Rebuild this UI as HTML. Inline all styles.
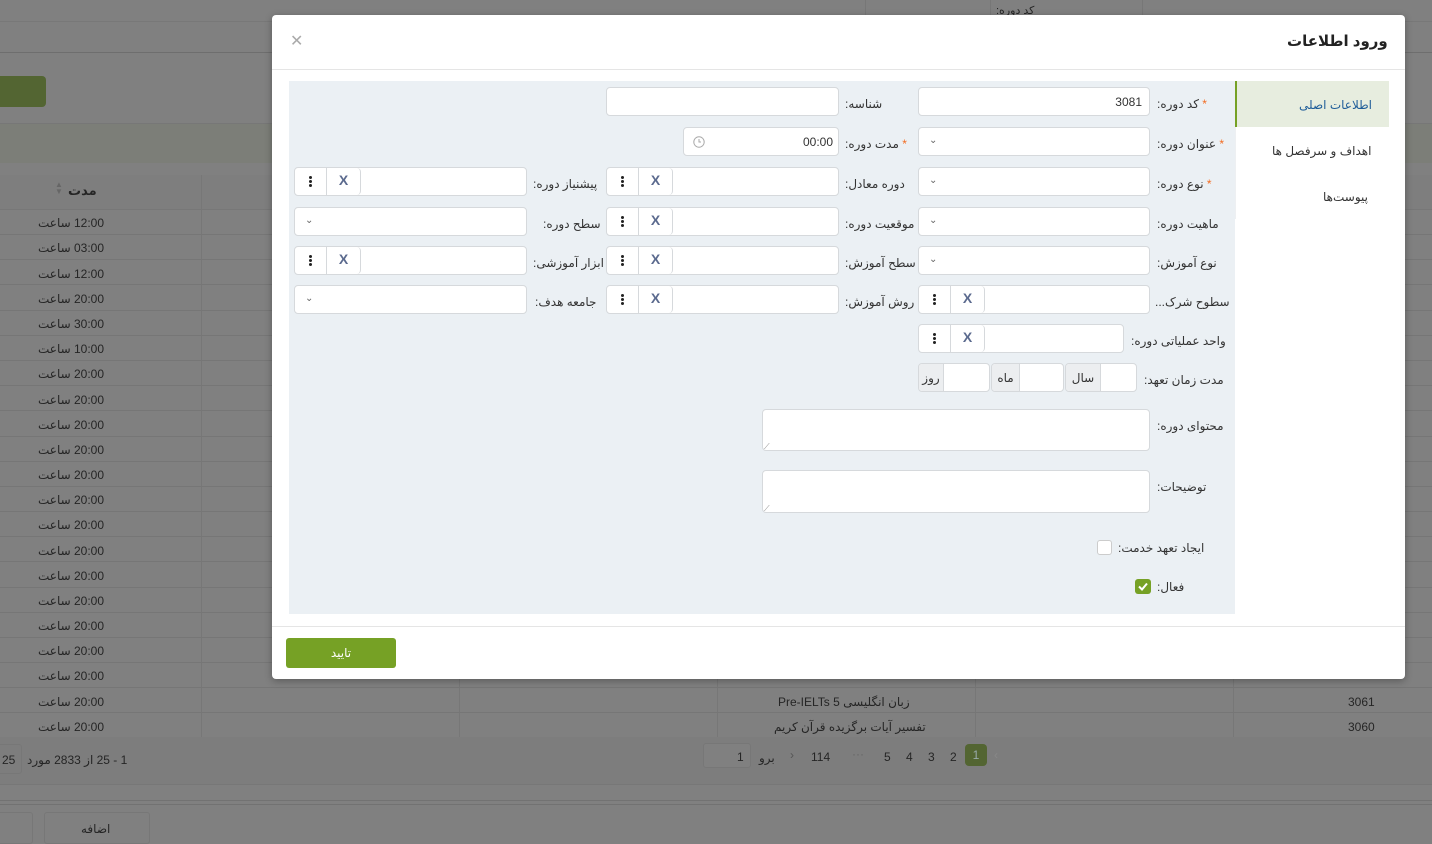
<!DOCTYPE html>
<html><head><meta charset="utf-8">
<style>
*{margin:0;padding:0;box-sizing:border-box}
body{width:1432px;height:843px;overflow:hidden;background:#808080;font-family:"Liberation Sans","DejaVu Sans",sans-serif;font-size:12px;color:#222;position:relative}
.a{position:absolute}
.row{position:absolute;left:0;width:1432px;height:25px;border-bottom:1px solid #767676}
.t{position:absolute;font-size:12px;color:#252525;direction:rtl;white-space:nowrap;margin-top:1px}
.vl{position:absolute;top:175px;height:562px;width:1px;background:#777}
.modal{position:absolute;left:272px;top:15px;width:1133px;height:664px;background:#fff;border-radius:4px;box-shadow:0 2px 8px rgba(0,0,0,.3)}
.in{position:absolute;height:29px;background:#fff;border:1px solid #d6d9dc;border-radius:4px}
.lb{position:absolute;font-size:12px;color:#333;direction:rtl;text-align:left;white-space:nowrap;line-height:14px}
.st{color:#f36c21}
.dots{position:absolute;left:0;top:0;width:32px;height:27px;border-right:1px solid #d6d9dc}
.dots i{position:absolute;left:14px;width:3px;height:3px;background:#222;border-radius:50%}
.xx{position:absolute;left:32px;top:0;width:34px;height:27px;border-right:1px solid #d6d9dc;border-radius:0 4px 4px 0;color:#5b6a8e;font-size:14px;font-weight:bold;text-align:center;line-height:24px}
.chev{position:absolute;left:10px;top:7px;font-size:10px;color:#666}
</style></head><body>
<div class="a" style="left:0;top:0;width:1432px;height:22px;border-bottom:1px solid #787878"></div>
<div class="a" style="left:865px;top:0;width:1px;height:22px;background:#777"></div>
<div class="a" style="left:990px;top:0;width:1px;height:22px;background:#777"></div>
<div class="a" style="left:1142px;top:0;width:1px;height:22px;background:#777"></div>
<div class="t" style="left:996px;top:3px;font-size:11px">کد دوره:</div>
<div class="a" style="left:0;top:52px;width:1432px;height:1px;background:#6e6e6e"></div>
<div class="a" style="left:-5px;top:76px;width:51px;height:31px;background:#536532;border-radius:4px"></div>
<div class="a" style="left:0;top:123px;width:1432px;height:40px;background:#7c7e78;border-top:1px solid #777"></div>
<div class="a" style="left:0;top:175px;width:1432px;height:35px;background:#7e7e7e;border-bottom:1px solid #777"></div>
<div class="t" style="left:68px;top:182px;font-weight:bold;font-size:13px">مدت</div>
<div class="a" style="left:55px;top:181px;color:#666;font-size:8px;line-height:7px">▲<br>▼</div>
<div class="vl" style="left:201px"></div><div class="vl" style="left:459px"></div><div class="vl" style="left:717px"></div><div class="vl" style="left:975px"></div><div class="vl" style="left:1233px"></div>
<div class="row" style="top:210px"></div><div class="t" style="left:38px;top:215px">12:00 ساعت</div>
<div class="row" style="top:235px"></div><div class="t" style="left:38px;top:240px">03:00 ساعت</div>
<div class="row" style="top:260px"></div><div class="t" style="left:38px;top:266px">12:00 ساعت</div>
<div class="row" style="top:286px"></div><div class="t" style="left:38px;top:291px">20:00 ساعت</div>
<div class="row" style="top:311px"></div><div class="t" style="left:38px;top:316px">30:00 ساعت</div>
<div class="row" style="top:336px"></div><div class="t" style="left:38px;top:341px">10:00 ساعت</div>
<div class="row" style="top:361px"></div><div class="t" style="left:38px;top:366px">20:00 ساعت</div>
<div class="row" style="top:386px"></div><div class="t" style="left:38px;top:392px">20:00 ساعت</div>
<div class="row" style="top:412px"></div><div class="t" style="left:38px;top:417px">20:00 ساعت</div>
<div class="row" style="top:437px"></div><div class="t" style="left:38px;top:442px">20:00 ساعت</div>
<div class="row" style="top:462px"></div><div class="t" style="left:38px;top:467px">20:00 ساعت</div>
<div class="row" style="top:487px"></div><div class="t" style="left:38px;top:492px">20:00 ساعت</div>
<div class="row" style="top:512px"></div><div class="t" style="left:38px;top:517px">20:00 ساعت</div>
<div class="row" style="top:537px"></div><div class="t" style="left:38px;top:543px">20:00 ساعت</div>
<div class="row" style="top:563px"></div><div class="t" style="left:38px;top:568px">20:00 ساعت</div>
<div class="row" style="top:588px"></div><div class="t" style="left:38px;top:593px">20:00 ساعت</div>
<div class="row" style="top:613px"></div><div class="t" style="left:38px;top:618px">20:00 ساعت</div>
<div class="row" style="top:638px"></div><div class="t" style="left:38px;top:643px">20:00 ساعت</div>
<div class="row" style="top:663px"></div><div class="t" style="left:38px;top:668px">20:00 ساعت</div>
<div class="row" style="top:688px"></div><div class="t" style="left:38px;top:694px">20:00 ساعت</div><div class="t" style="left:778px;top:694px">زبان انگلیسی Pre-IELTs 5</div><div class="t" style="left:1348px;top:694px">3061</div>
<div class="row" style="top:713px"></div><div class="t" style="left:38px;top:719px">20:00 ساعت</div><div class="t" style="left:774px;top:719px">تفسیر آیات برگزیده قرآن کریم</div><div class="t" style="left:1348px;top:719px">3060</div>
<div class="a" style="left:0;top:737px;width:1432px;height:48px;background:#7d7d7d;border-bottom:1px solid #777"></div>
<div class="a" style="left:-5px;top:744px;width:27px;height:30px;border:1px solid #777;border-radius:3px"></div>
<div class="t" style="left:2px;top:752px">25</div>
<div class="t" style="left:27px;top:752px">1 - 25 از 2833 مورد</div>
<div class="a" style="left:703px;top:743px;width:48px;height:25px;border:1px solid #777;border-radius:3px;background:#808080"></div>
<div class="t" style="left:737px;top:749px">1</div>
<div class="t" style="left:759px;top:750px">برو</div>
<div class="t" style="left:790px;top:747px;color:#555">‹</div>
<div class="t" style="left:811px;top:749px">114</div>
<div class="t" style="left:852px;top:746px;color:#666">···</div>
<div class="t" style="left:884px;top:749px">5</div><div class="t" style="left:906px;top:749px">4</div><div class="t" style="left:928px;top:749px">3</div><div class="t" style="left:950px;top:749px">2</div>
<div class="a" style="left:965px;top:744px;width:22px;height:22px;background:#536532;border-radius:4px;color:#9aa;text-align:center;line-height:22px">1</div>
<div class="t" style="left:994px;top:747px;color:#888">›</div>
<div class="a" style="left:0;top:800px;width:1432px;height:5px;border-top:1px solid #727272;border-bottom:1px solid #727272"></div>
<div class="a" style="left:-5px;top:812px;width:38px;height:32px;border:1px solid #777;border-radius:3px"></div>
<div class="a" style="left:44px;top:812px;width:106px;height:32px;border:1px solid #777;border-radius:3px"></div>
<div class="t" style="left:81px;top:821px">اضافه</div>

<div class="modal"></div>
<div class="a" style="left:1287px;top:32px;font-size:15px;font-weight:bold;color:#222;direction:rtl">ورود اطلاعات</div>
<div class="a" style="left:290px;top:31px;font-size:16px;color:#aaa">✕</div>
<div class="a" style="left:272px;top:69px;width:1133px;height:1px;background:#e5e5e5"></div>
<div class="a" style="left:289px;top:81px;width:946px;height:533px;background:#ebf0f4"></div>
<div class="a" style="left:1235px;top:81px;width:154px;height:46px;background:#e7eddf;border-left:2px solid #76a125"></div>
<div class="a" style="left:1235px;top:127px;width:1px;height:92px;background:#eef0f2"></div>
<div class="lb" style="left:1299px;top:98px;color:#1f5d99">اطلاعات اصلی</div>
<div class="lb" style="left:1272px;top:144px">اهداف و سرفصل ها</div>
<div class="lb" style="left:1323px;top:190px">پیوست‌ها</div>

<div class="lb" style="left:1157px;top:97px"><span class="st">*</span> کد دوره:</div>
<div class="in" style="left:918px;top:87px;width:232px"><span class="a" style="right:7px;top:7px;color:#333">3081</span></div>
<div class="lb" style="left:1157px;top:137px"><span class="st">*</span> عنوان دوره:</div>
<div class="in" style="left:918px;top:127px;width:232px"><span class="chev">⌄</span></div>
<div class="lb" style="left:1157px;top:177px"><span class="st">*</span> نوع دوره:</div>
<div class="in" style="left:918px;top:167px;width:232px"><span class="chev">⌄</span></div>
<div class="lb" style="left:1157px;top:217px">ماهیت دوره:</div>
<div class="in" style="left:918px;top:207px;width:232px"><span class="chev">⌄</span></div>
<div class="lb" style="left:1157px;top:256px">نوع آموزش:</div>
<div class="in" style="left:918px;top:246px;width:232px"><span class="chev">⌄</span></div>
<div class="lb" style="left:1155px;top:295px">سطوح شرک...</div>
<div class="in" style="left:918px;top:285px;width:232px"><div class="dots"><i style="top:8px"></i><i style="top:12px"></i><i style="top:16px"></i></div><div class="xx">X</div></div>
<div class="lb" style="left:1131px;top:334px">واحد عملیاتی دوره:</div>
<div class="in" style="left:918px;top:324px;width:206px"><div class="dots"><i style="top:8px"></i><i style="top:12px"></i><i style="top:16px"></i></div><div class="xx">X</div></div>
<div class="lb" style="left:1144px;top:373px">مدت زمان تعهد:</div>
<div class="in" style="left:1065px;top:363px;width:72px;overflow:hidden"><div class="a" style="left:0;top:0;width:35px;height:27px;background:#eceef0;border-right:1px solid #d6d9dc;text-align:center;line-height:29px;color:#333">سال</div></div>
<div class="in" style="left:991px;top:363px;width:73px;overflow:hidden"><div class="a" style="left:0;top:0;width:28px;height:27px;background:#eceef0;border-right:1px solid #d6d9dc;text-align:center;line-height:29px;color:#333">ماه</div></div>
<div class="in" style="left:918px;top:363px;width:72px;overflow:hidden"><div class="a" style="left:0;top:0;width:25px;height:27px;background:#eceef0;border-right:1px solid #d6d9dc;text-align:center;line-height:29px;color:#333">روز</div></div>
<div class="lb" style="left:1157px;top:419px">محتوای دوره:</div>
<div class="in" style="left:762px;top:409px;width:388px;height:42px"><span class="a" style="left:1px;bottom:-2px;font-size:8px;color:#888">⟋</span></div>
<div class="lb" style="left:1157px;top:480px">توضیحات:</div>
<div class="in" style="left:762px;top:470px;width:388px;height:43px"><span class="a" style="left:1px;bottom:-2px;font-size:8px;color:#888">⟋</span></div>
<div class="lb" style="left:1118px;top:541px">ایجاد تعهد خدمت:</div>
<div class="a" style="left:1097px;top:540px;width:15px;height:15px;background:#fff;border:1px solid #ccc;border-radius:3px"></div>
<div class="lb" style="left:1157px;top:580px">فعال:</div>
<div class="a" style="left:1135px;top:579px;width:16px;height:15px;background:#76a125;border-radius:3px"><svg width="16" height="15" viewBox="0 0 16 15"><path d="M4 7.5l3 3 5-6" stroke="#fff" stroke-width="2" fill="none"/></svg></div>

<div class="lb" style="left:845px;top:97px">شناسه:</div>
<div class="in" style="left:606px;top:87px;width:233px"></div>
<div class="lb" style="left:845px;top:137px"><span class="st">*</span> مدت دوره:</div>
<div class="in" style="left:683px;top:127px;width:156px"><span class="a" style="right:5px;top:7px;color:#333">00:00</span><svg class="a" style="left:9px;top:8px" width="12" height="12" viewBox="0 0 12 12"><circle cx="6" cy="6" r="5.2" stroke="#aaa" fill="none"/><path d="M6 3v3h2" stroke="#aaa" fill="none"/></svg></div>
<div class="lb" style="left:845px;top:177px">دوره معادل:</div>
<div class="in" style="left:606px;top:167px;width:233px"><div class="dots"><i style="top:8px"></i><i style="top:12px"></i><i style="top:16px"></i></div><div class="xx">X</div></div>
<div class="lb" style="left:845px;top:217px">موقعیت دوره:</div>
<div class="in" style="left:606px;top:207px;width:233px"><div class="dots"><i style="top:8px"></i><i style="top:12px"></i><i style="top:16px"></i></div><div class="xx">X</div></div>
<div class="lb" style="left:845px;top:256px">سطح آموزش:</div>
<div class="in" style="left:606px;top:246px;width:233px"><div class="dots"><i style="top:8px"></i><i style="top:12px"></i><i style="top:16px"></i></div><div class="xx">X</div></div>
<div class="lb" style="left:845px;top:295px">روش آموزش:</div>
<div class="in" style="left:606px;top:285px;width:233px"><div class="dots"><i style="top:8px"></i><i style="top:12px"></i><i style="top:16px"></i></div><div class="xx">X</div></div>

<div class="lb" style="left:533px;top:177px">پیشنیاز دوره:</div>
<div class="in" style="left:294px;top:167px;width:233px"><div class="dots"><i style="top:8px"></i><i style="top:12px"></i><i style="top:16px"></i></div><div class="xx">X</div></div>
<div class="lb" style="left:533px;top:217px;padding-left:10px">سطح دوره:</div>
<div class="in" style="left:294px;top:207px;width:233px"><span class="chev">⌄</span></div>
<div class="lb" style="left:533px;top:256px">ابزار آموزشی:</div>
<div class="in" style="left:294px;top:246px;width:233px"><div class="dots"><i style="top:8px"></i><i style="top:12px"></i><i style="top:16px"></i></div><div class="xx">X</div></div>
<div class="lb" style="left:533px;top:295px;padding-left:2px">جامعه هدف:</div>
<div class="in" style="left:294px;top:285px;width:233px"><span class="chev">⌄</span></div>

<div class="a" style="left:272px;top:626px;width:1133px;height:1px;background:#e5e5e5"></div>
<div class="a" style="left:286px;top:638px;width:110px;height:30px;background:#76a125;border-radius:3px;color:#fff;text-align:center;line-height:31px;direction:rtl">تایید</div>
</body></html>
